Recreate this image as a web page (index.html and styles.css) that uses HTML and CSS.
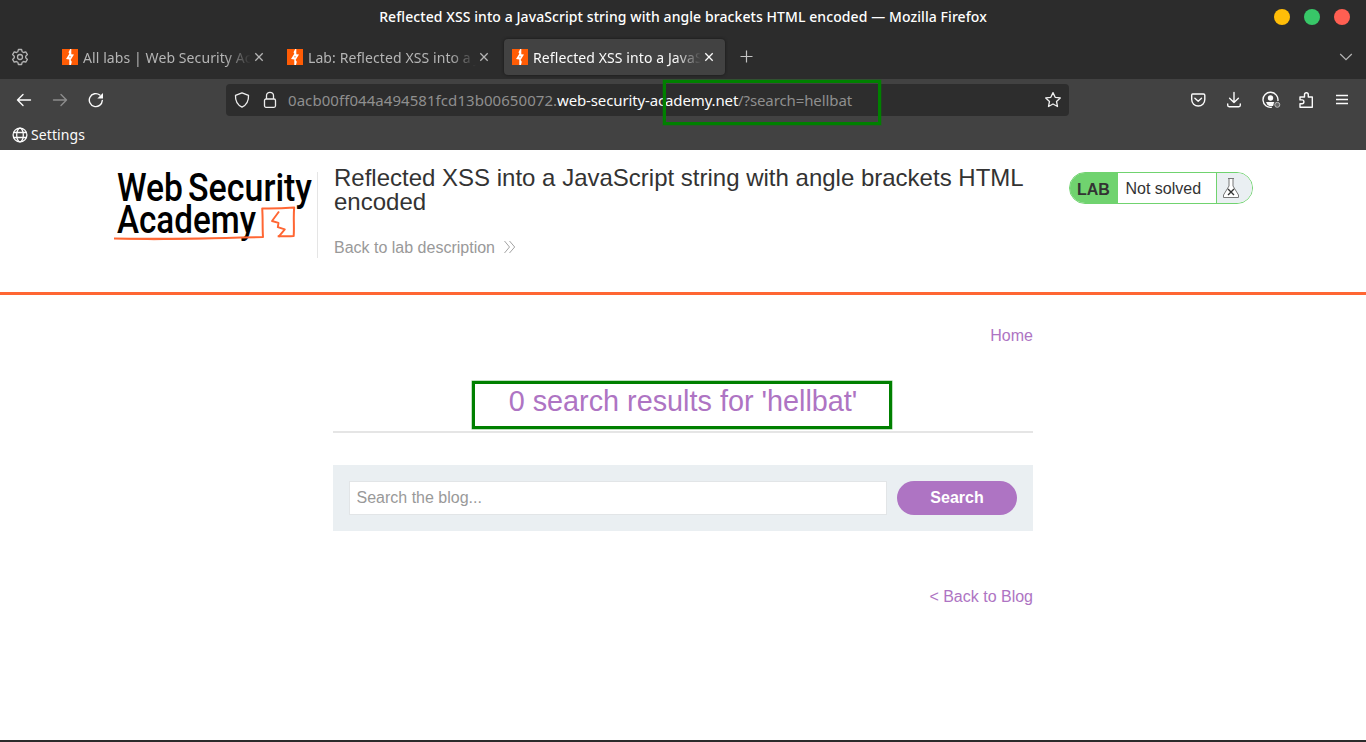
FILE: index.html
```html
<!DOCTYPE html>
<html lang="en">
<head>
<meta charset="utf-8">
<title>Reflected XSS into a JavaScript string with angle brackets HTML encoded</title>
<link rel="stylesheet" href="styles.css">
</head>
<body>
<svg class="defs" width="0" height="0">
  <symbol id="burp" viewBox="0 0 16 16"><path fill="#ff5c05" d="M0 0h16v16H0z"/><path fill="#fff" d="M8.200 0H9.300V5.200L12 5.600 8.600 11 9.800 12.800 9 16H7.300V10.600L4 10 7.300 4.800 6.500 3.200z"/><path fill="#ff5c05" d="M7.400 7.300l1.500.1-.6 1.100-1-.2z"/></symbol>
  <symbol id="x" viewBox="0 0 10 10"><path d="M1.300 1.300l7.400 7.400M8.700 1.300L1.300 8.700" fill="none" stroke="currentColor" stroke-width="1.300"/></symbol>
</svg>
<div class="window">
  <header class="titlebar">
    <span class="window-title">Reflected XSS into a JavaScript string with angle brackets HTML encoded — Mozilla Firefox</span>
    <div class="controls"><i class="dot min"></i><i class="dot max"></i><i class="dot close"></i></div>
  </header>
  <div class="tabs">
    <svg class="gear" width="18" height="18" viewBox="0 0 18 18" fill="none" stroke="#b4b4b4" stroke-width="1.300" stroke-linejoin="round"><path d="M7.400 1.500h3.200l.6 2.300 1.300.7 2.300-.6 1.600 2.700-1.700 1.700v1.400l1.700 1.700-1.600 2.700-2.300-.6-1.300.7-.6 2.300H7.400l-.6-2.300-1.300-.7-2.300.6-1.600-2.700 1.700-1.700V8.300L1.600 6.600l1.600-2.700 2.300.6 1.300-.7z"/><circle cx="9" cy="9" r="2.500"/></svg>
    <div class="tab"><svg class="fav"><use href="#burp"/></svg><span class="label">All labs | Web Security Academy</span><svg class="tab-x"><use href="#x"/></svg></div>
    <div class="tab"><svg class="fav"><use href="#burp"/></svg><span class="label">Lab: Reflected XSS into a JavaScript</span><svg class="tab-x"><use href="#x"/></svg></div>
    <div class="tab active"><svg class="fav"><use href="#burp"/></svg><span class="label">Reflected XSS into a JavaScript string</span><svg class="tab-x"><use href="#x"/></svg></div>
    <svg class="plus" width="13" height="13" viewBox="0 0 13 13"><path d="M6.500 .5v12M.5 6.500h12" stroke="#c4c4c4" stroke-width="1.200"/></svg>
    <svg class="chevron" width="14" height="8" viewBox="0 0 14 8"><path d="M1.200 1L7 6.600 12.800 1" fill="none" stroke="#b5b5b5" stroke-width="1.200"/></svg>
  </div>
  <nav class="toolbar">
    <div class="nav-buttons">
      <svg width="16" height="16" viewBox="0 0 16 16" fill="none" stroke="#fbfbfb" stroke-width="1.400" stroke-linecap="round" stroke-linejoin="round"><path d="M14.500 8h-13M7 2.600L1.500 8 7 13.400"/></svg>
      <svg width="16" height="16" viewBox="0 0 16 16" fill="none" stroke="#8c8c8c" stroke-width="1.400" stroke-linecap="round" stroke-linejoin="round"><path d="M1.500 8h13M9 2.600L14.500 8 9 13.400"/></svg>
      <svg width="16" height="16" viewBox="0 0 16 16"><path d="M14.300 8.500A6.500 6.500 0 1 1 11.800 3" fill="none" stroke="#fbfbfb" stroke-width="1.400" stroke-linecap="round"/><path d="M15 1v5.500H9.300z" fill="#fbfbfb"/></svg>
    </div>
    <div class="urlbar">
      <svg class="shield" width="16" height="16" viewBox="0 0 16 16"><path d="M8 .8l6.500 2.600c.3 5.300-1.500 9.300-6.500 11.800C3 12.700 1.200 8.700 1.500 3.400z" fill="none" stroke="#eee" stroke-width="1.300" stroke-linejoin="round"/></svg>
      <svg class="lock" width="14" height="18" viewBox="0 0 14 18" fill="none" stroke="#eee" stroke-width="1.300"><rect x="1.500" y="8" width="11" height="8.300" rx="1.500"/><path d="M3.500 8V4.800a3.500 3.500 0 0 1 7 0V8"/></svg>
      <div class="url"><span class="sub">0acb00ff044a494581fcd13b00650072.</span><span class="domain">web-security-academy.net</span><span class="query">/?search=hellbat</span></div>
      <svg class="star" width="18" height="18" viewBox="0 0 18 18"><path d="M9 1.600l2.200 4.700 5.100.6-3.800 3.500 1 5.100L9 13l-4.500 2.500 1-5.100-3.800-3.500 5.100-.6z" fill="none" stroke="#eee" stroke-width="1.300" stroke-linejoin="round"/></svg>
    </div>
    <div class="actions">
      <svg viewBox="0 0 18 18" fill="none" stroke="#fbfbfb" stroke-width="1.400" stroke-linecap="round" stroke-linejoin="round"><path d="M3.500 3h11q1.300 0 1.300 1.300v4.200a6.300 6.300 0 0 1-13.100 0V4.300Q2.700 3 3.500 3zM5.900 7.300l3.300 3 3.300-3"/></svg>
      <svg viewBox="0 0 18 18" fill="none" stroke="#fbfbfb" stroke-width="1.400" stroke-linecap="round" stroke-linejoin="round"><path d="M9 1.500v10M4.600 7.300L9 11.600l4.400-4.300M2.700 13v1.300q0 1.400 1.400 1.400h9.800q1.400 0 1.400-1.400V13"/></svg>
      <svg class="account" viewBox="0 0 20 18"><path d="M10.800 16.200A7.500 7.500 0 1 1 16.900 10" fill="none" stroke="#fbfbfb" stroke-width="1.400"/><circle cx="9.500" cy="7" r="2.700" fill="#fbfbfb"/><path d="M5 11h9.200l-2.200 4H8.500q-2.700-1-3.500-4z" fill="#fbfbfb"/><circle cx="16.300" cy="13.800" r="3.700" fill="#424242"/><circle cx="16.300" cy="13.800" r="2.500" fill="#666" stroke="#bbb"/></svg>
      <svg viewBox="0 0 18 18"><path d="M3 6h4.500V3.700a1.900 1.900 0 0 1 3.800 0V6H15.300V16.300H3v-3.600h2a1.900 1.900 0 0 0 0-3.800H3z" fill="none" stroke="#fbfbfb" stroke-width="1.400" stroke-linejoin="round"/></svg>
      <svg viewBox="0 0 18 18"><path d="M3 4.500h12M3 8.500h12M3 12.500h12" stroke="#fbfbfb" stroke-width="1.300"/></svg>
    </div>
  </nav>
  <div class="bookmarks">
    <svg width="16" height="16" viewBox="0 0 16 16" fill="none" stroke="#fbfbfb" stroke-width="1.300"><circle cx="8" cy="8" r="6.900"/><ellipse cx="8" cy="8" rx="3.300" ry="6.900"/><path d="M1.500 5.500h13M1.500 10.500h13"/></svg>
    <span>Settings</span>
  </div>
  <main class="page">
    <section class="lab-header">
      <svg class="logo" width="200" height="74" viewBox="0 0 200 74">
        <g class="logo-text">
          <text x="3" y="28.500" textLength="66" lengthAdjust="spacingAndGlyphs">Web</text>
          <text x="74" y="28.500" textLength="124" lengthAdjust="spacingAndGlyphs">Security</text>
          <text x="3" y="61" textLength="139" lengthAdjust="spacingAndGlyphs">Academy</text>
        </g>
        <g fill="none" stroke="#ff6633" stroke-linejoin="round"><path d="M0 66.500c50 .8 100-.2 149-1.500-.7-10 0-18-.8-28.500 10 .2 20 0 32-.9-1 10 .2 18-.5 28.400-5 .6-10 .3-16 .2" stroke-width="2"/><path d="M165 39.500l-7 9.500 6.500 1.800-.7 4.400 7 2.200-6.300 7.400" stroke-width="1.900"/><path d="M1 66.500l39 1.200 60-1.200" stroke-width="1"/></g>
      </svg>
      <div class="lab-title">
        <h2>Reflected XSS into a JavaScript string with angle brackets HTML encoded</h2>
        <a class="back-link">Back to lab description <svg width="14" height="14" viewBox="0 0 14 14"><path d="M1.500 1l5 6-5 6M6.500 1l5.200 6-5.200 6" fill="none" stroke="#999" stroke-width=".9"/></svg></a>
      </div>
      <div class="status"><b>LAB</b><span>Not solved</span><div class="flask"><svg width="18" height="22" viewBox="0 0 18 22" fill="none"><path d="M6 1.500h6M7 2v7L1.500 18v2.500h15V18L11 9V2" fill="#fff" stroke="#777" stroke-width="1"/><path d="M6 12l6 6M12 12l-6 6" stroke="#333" stroke-width="1.400"/></svg></div></div>
    </section>
    <section class="blog">
      <a class="home">Home</a>
      <h1>0 search results for 'hellbat'</h1>
      <form class="search"><input type="text" placeholder="Search the blog..."><button type="button">Search</button></form>
      <a class="back-blog">&lt; Back to Blog</a>
    </section>
  </main>
  <div class="mark mark-url"></div>
  <div class="mark mark-result"></div>
</div>
</body>
</html>
```
FILE: styles.css
```css
* { box-sizing: border-box; }
body { margin: 0; background: #fff; font-family: "Liberation Sans", Arial, sans-serif; }
svg { display: block; flex: none; }
.defs { position: absolute; }
.window { position: relative; width: 1366px; height: 742px; overflow: hidden; display: flex; flex-direction: column; border-bottom: 2px solid #2b2b2b; }
.titlebar, .tabs, .toolbar, .bookmarks { font-family: "Noto Sans", "Open Sans", sans-serif; flex: none; }
.titlebar { height: 34px; background: #2c2c2c; display: grid; grid-template-columns: 1fr auto 1fr; align-items: center; color: #fff; }
.window-title { grid-column: 2; padding-bottom: 2px; font-size: 14px; font-weight: 500; letter-spacing: .08px; white-space: nowrap; }
.controls { justify-self: end; display: flex; gap: 14px; padding-right: 16px; }
.dot { width: 16px; height: 16px; border-radius: 50%; }
.min { background: #ffbd08; }
.max { background: #38c768; }
.close { background: #ff5f52; }
.tabs { height: 45px; background: #2c2c2c; display: flex; align-items: center; padding: 0 13px 0 11px; }
.gear { margin: 0 25px 0 0; }
.tab { width: 221px; height: 36px; margin-right: 4px; padding: 0 11px 0 8px; display: flex; align-items: center; border-radius: 4px; color: #b5b5b5; }
.tab.active { background: #424242; color: #fbfbfb; box-shadow: 0 0 3px #161616; }
.fav { width: 16px; height: 16px; margin-right: 5px; }
.label { width: 168px; overflow: hidden; white-space: nowrap; font-size: 14px; letter-spacing: .09px; padding-top: 1px; -webkit-mask-image: linear-gradient(90deg, #000 142px, transparent 168px); mask-image: linear-gradient(90deg, #000 142px, transparent 168px); }
.tab-x { width: 10px; height: 10px; margin-left: 3px; }
.plus { margin-left: 11px; }
.chevron { margin-left: auto; }
.toolbar { height: 42px; background: #424242; display: flex; align-items: center; }
.nav-buttons { display: flex; gap: 20px; padding-left: 16px; width: 226px; }
.urlbar { width: 843px; height: 32px; background: #2d2d2d; border-radius: 4px; display: flex; align-items: center; padding: 0 7px 0 8px; }
.lock { margin: 0 11px 0 13px; }
.url { display: flex; font-size: 15px; color: #8f8f8f; white-space: nowrap; }
.sub { width: 269px; letter-spacing: .06px; }
.domain { width: 181px; color: #fbfbfb; letter-spacing: -.13px; }
.query { letter-spacing: -.1px; }
.star { margin-left: auto; }
.actions { display: flex; gap: 18px; padding-left: 120px; }
.actions svg { width: 18px; height: 18px; }
.actions .account { width: 20px; margin-right: -2px; }
.bookmarks { height: 29px; background: #424242; display: flex; align-items: center; gap: 3px; padding: 0 12px 1px; font-size: 14px; letter-spacing: .1px; color: #fbfbfb; }
.bookmarks span { padding-bottom: 1px; }
.page { flex: 1; background: #fff; }
.lab-header { height: 145px; border-bottom: 3px solid #ff6633; display: flex; align-items: flex-start; padding: 22px 113px 0 114px; }
.logo-text { font-family: "Roboto", "Liberation Sans", sans-serif; font-size: 38px; font-weight: 500; fill: #000; }
.lab-title { width: 726px; height: 86px; margin-left: 3px; padding-left: 16px; border-left: 1px solid #e5e5e5; }
h2 { margin: -6px 0 25px; font-size: 24px; line-height: 24px; font-weight: 400; color: #333; }
.back-link { display: flex; align-items: center; gap: 8px; color: #999; font-size: 16px; line-height: 18px; }
.back-link svg { margin-top: -2px; }
.status { margin-left: auto; width: 184px; height: 32px; display: flex; border: 1px solid #70d36f; border-radius: 16px; overflow: hidden; font-size: 16px; line-height: 33px; color: #333; }
.status b { width: 48px; padding-left: 7px; background: #70d36f; }
.status span { width: 99px; padding-left: 7.500px; line-height: 31px; border-right: 1px solid #70d36f; }
.flask { flex: 1; background: #eaeff2; padding: 4px 5px; }
.blog { width: 700px; margin: 0 auto; display: flex; flex-direction: column; color: #ae74c3; font-size: 16px; line-height: 18px; }
.home, .back-blog { align-self: flex-end; }
.home { margin-top: 32px; }
h1 { margin: 37px 0 32px; height: 51px; border-bottom: 2px solid #e5e5e5; text-align: center; font-size: 28.800px; line-height: 38px; font-weight: 400; }
.search { height: 66px; display: flex; gap: 10px; padding: 16px; background: #eaeff2; }
.search input { flex: 1; min-width: 0; height: 34px; padding: 0 6.500px; border: 1px solid #e2e5e7; border-radius: 0; font: 16px "Liberation Sans", sans-serif; background: #fff; }
.search input::placeholder { color: #999; opacity: 1; }
.search button { width: 120px; height: 34px; border: 0; border-radius: 17px; background: #ae74c3; color: #fff; font: bold 16px "Liberation Sans", sans-serif; }
.back-blog { margin-top: 57px; }
/* Annotation rectangles lie over the browser window */
.mark { position: absolute; border: 3px solid #008000; box-shadow: 0 0 0 .5px #00800080; }
.mark-url { left: 662.500px; top: 79.500px; width: 218px; height: 45px; }
.mark-result { left: 471.500px; top: 380.500px; width: 420px; height: 48px; }
```
